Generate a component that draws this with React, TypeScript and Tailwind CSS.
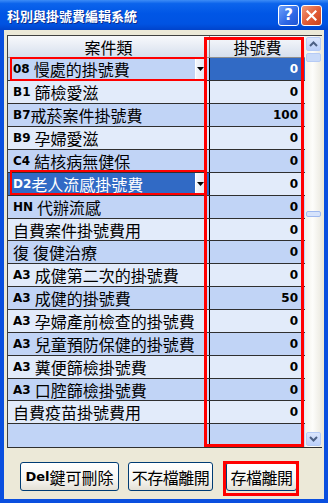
import type { ReactNode } from "react";

const cjk = "font-['Noto_Sans_CJK_TC','Noto_Sans_CJK_SC',sans-serif]";
const latinBold = "font-['DejaVu_Sans','Noto_Sans_CJK_TC',sans-serif] font-bold";

type Fee = {
  code: string;
  gap: boolean;
  name: string;
  fee: string;
  sel?: "left" | "right";
  cjkCode?: boolean;
};

const rows: Fee[] = [
  { code: "08", gap: true, name: "慢處的掛號費", fee: "0", sel: "right" },
  { code: "B1", gap: true, name: "篩檢愛滋", fee: "0" },
  { code: "B7", gap: false, name: "戒菸案件掛號費", fee: "100" },
  { code: "B9", gap: true, name: "孕婦愛滋", fee: "0" },
  { code: "C4", gap: true, name: "結核病無健保", fee: "0" },
  { code: "D2", gap: false, name: "老人流感掛號費", fee: "0", sel: "left" },
  { code: "HN", gap: true, name: "代辦流感", fee: "0" },
  { code: "", gap: false, name: "自費案件掛號費用", fee: "0" },
  { code: "復", gap: true, name: "復健治療", fee: "0", cjkCode: true },
  { code: "A3", gap: true, name: "成健第二次的掛號費", fee: "0" },
  { code: "A3", gap: true, name: "成健的掛號費", fee: "50" },
  { code: "A3", gap: true, name: "孕婦產前檢查的掛號費", fee: "0" },
  { code: "A3", gap: true, name: "兒童預防保健的掛號費", fee: "0" },
  { code: "A3", gap: true, name: "糞便篩檢掛號費", fee: "0" },
  { code: "A3", gap: true, name: "口腔篩檢掛號費", fee: "0" },
  { code: "", gap: false, name: "自費疫苗掛號費用", fee: "0" }
];

function DropArrow() {
  return (
    <span className="ml-auto mr-[4px] flex h-full w-[10px] items-center justify-center border-l border-[#ffffff] bg-[linear-gradient(to_right,#f4f6fb,#dfe6f3)]">
      <svg width="7" height="4" viewBox="0 0 7 4">
        <path d="M0 0h7L3.5 4z" fill="#000" />
      </svg>
    </span>
  );
}

function Row({ r, i }: { r: Fee; i: number }) {
  const dark = i % 2 === 0;
  const h = i === 7 || i === 14 ? "h-[22px]" : "h-[23px]";
  const left =
    r.sel === "left" ? "bg-[#316ac5] text-white" : dark ? "bg-[#c1d4f6] text-black" : "bg-[#e2ebfa] text-black";
  const right =
    r.sel === "right" ? "bg-[#316ac5] text-white" : dark ? "bg-[#c1d4f6] text-black" : "bg-[#e2ebfa] text-black";
  return (
    <div className={`flex ${h} border-b border-[#2f2f2f]`}>
      <div className={`flex w-[202px] items-center border-r border-black pl-[5px] ${left}`}>
        {r.code && (
          <span className={`${r.cjkCode ? `${cjk} text-[16px]` : `${latinBold} text-[12px]`} leading-none`}>
            {r.code}
          </span>
        )}
        {r.gap && <span className="w-[4px]" />}
        <span className={`${cjk} text-[16px] leading-none`}>{r.name}</span>
        {r.sel && <DropArrow />}
      </div>
      <div className={`flex w-[95px] items-center justify-end pr-[7px] ${right}`}>
        <span className={`${latinBold} text-[12px] leading-none`}>{r.fee}</span>
      </div>
    </div>
  );
}

function ScrollBtn({ children }: { children: ReactNode }) {
  return (
    <div className="mx-[1px] flex h-[14px] items-center justify-center rounded-[2px] border border-[#b6cbf5] bg-[linear-gradient(to_bottom,#dbe6fd,#bcd0fa)]">
      {children}
    </div>
  );
}

function XpButton({ w, children }: { w: string; children: ReactNode }) {
  return (
    <button
      className={`${w} flex h-[29px] items-center justify-center rounded-[3px] border border-[#003c74] bg-[linear-gradient(to_bottom,#ffffff_0%,#f7f6f2_60%,#e3e0d6_100%)] text-black`}
    >
      {children}
    </button>
  );
}

export default function App() {
  return (
    <div className="relative flex h-[503px] w-[328px] flex-col overflow-hidden bg-[#0a4fdf]">
      {/* title bar */}
      <div className="flex h-[30px] items-center bg-[linear-gradient(to_bottom,#3d8cf6_0%,#0c64ec_12%,#0056e6_45%,#0053e2_80%,#0043cb_100%)] pl-[7px] pr-[6px]">
        <span className={`${cjk} text-[13px] font-bold leading-none text-white [text-shadow:1px_1px_0_#0b2d8f]`}>
          科別與掛號費編輯系統
        </span>
        <div className="ml-auto flex gap-[2px]">
          <div className="flex h-[21px] w-[21px] items-center justify-center rounded-[3px] border border-white bg-[linear-gradient(135deg,#6fa2fb,#2d67e6_60%,#1f55d4)]">
            <span className="font-['DejaVu_Sans',sans-serif] text-[15px] font-bold leading-none text-white">?</span>
          </div>
          <div className="flex h-[21px] w-[21px] items-center justify-center rounded-[3px] border border-white bg-[linear-gradient(135deg,#ef9a7a,#e15a34_55%,#c9421c)]">
            <svg width="11" height="11" viewBox="0 0 11 11">
              <path d="M1.5 1.5l8 8M9.5 1.5l-8 8" stroke="#fff" strokeWidth="2.2" strokeLinecap="square" />
            </svg>
          </div>
        </div>
      </div>

      {/* body */}
      <div className="mx-[4px] mb-[4px] flex flex-1 flex-col bg-[#ece9d8]">
        <div className="ml-[3px] mr-[2px] mt-[5px] flex h-[413px] border-l border-t border-[#404040] border-b border-b-[#2f2f2f]">
          <div className="flex w-[297px] flex-col">
            <div className="flex h-[22px] border-b border-[#8e8e8e] bg-[linear-gradient(to_bottom,#f8f9fc,#d6dfed)]">
              <div className={`flex w-[202px] items-center justify-center border-r border-[#8e8e8e] ${cjk} text-[16px] leading-none`}>
                案件類
              </div>
              <div className={`flex w-[95px] items-center justify-center ${cjk} text-[16px] leading-none`}>
                掛號費
              </div>
            </div>
            {rows.map((r, i) => (
              <Row key={i} r={r} i={i} />
            ))}
            <div className="flex flex-1">
              <div className="w-[202px] border-r border-black bg-[#c1d4f6]" />
              <div className="w-[95px] bg-[#c1d4f6]" />
            </div>
          </div>
          {/* scrollbar */}
          <div className="flex w-[17px] flex-col bg-[linear-gradient(to_right,#f3f1ea,#fdfdfb_45%,#ebe9e0)] pt-[1px]">
            <ScrollBtn>
              <svg width="9" height="6" viewBox="0 0 9 6">
                <path d="M1 5l3.5-3.5L8 5" fill="none" stroke="#4d6185" strokeWidth="2" />
              </svg>
            </ScrollBtn>
            <div className="mx-[1px] mt-[2px] h-[9px] rounded-[2px] border border-[#b6cbf5] bg-[#c9daf9]" />
            <div className="mx-[1px] mt-[149px] h-[6px] rounded-[2px] border border-[#9fb9ef] bg-[#d6e3fb]" />
            <div className="flex-1" />
            <div className="mb-[1px]">
              <ScrollBtn>
                <svg width="9" height="6" viewBox="0 0 9 6">
                  <path d="M1 1l3.5 3.5L8 1" fill="none" stroke="#4d6185" strokeWidth="2" />
                </svg>
              </ScrollBtn>
            </div>
          </div>
        </div>

        {/* buttons */}
        <div className="mt-[14px] flex pl-[16px]">
          <XpButton w="w-[99px]">
            <span className={`${latinBold} text-[13px] leading-none`}>Del</span>
            <span className={`${cjk} text-[16px] leading-none`}>鍵可刪除</span>
          </XpButton>
          <div className="ml-[9px]">
            <XpButton w="w-[85px]">
              <span className={`${cjk} text-[16px] leading-none tracking-[-0.5px]`}>不存檔離開</span>
            </XpButton>
          </div>
          <div className="ml-[13px]">
            <XpButton w="w-[71px]">
              <span className={`${cjk} text-[16px] leading-none tracking-[-0.5px]`}>存檔離開</span>
            </XpButton>
          </div>
        </div>
      </div>

      {/* red annotation marks */}
      <div className="pointer-events-none absolute left-[204px] top-[37px] h-[410px] w-[100px] border-[3px] border-[#f00]" />
      <div className="pointer-events-none absolute left-[10px] top-[57px] h-[24px] w-[197px] border-2 border-[#f00]" />
      <div className="pointer-events-none absolute left-[10px] top-[170px] h-[25px] w-[197px] border-2 border-[#f00]" />
      <div className="pointer-events-none absolute left-[223px] top-[461px] h-[35px] w-[76px] border-[3px] border-[#f00]" />
    </div>
  );
}
